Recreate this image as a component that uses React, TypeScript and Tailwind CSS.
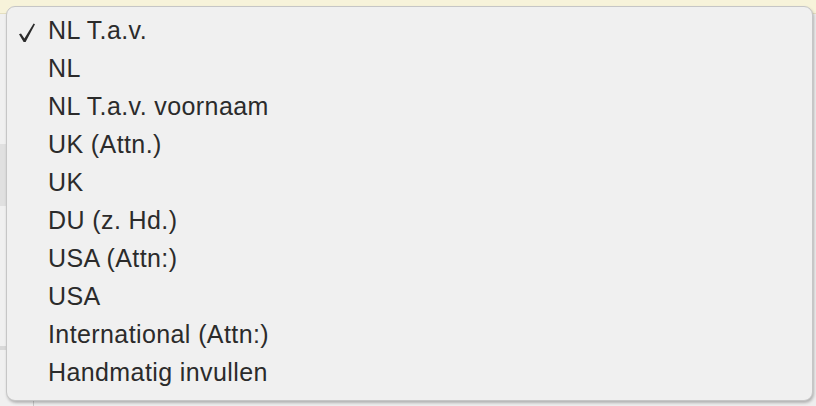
import React from 'react';

const options = [
  'NL T.a.v.',
  'NL',
  'NL T.a.v. voornaam',
  'UK (Attn.)',
  'UK',
  'DU (z. Hd.)',
  'USA (Attn:)',
  'USA',
  'International (Attn:)',
  'Handmatig invullen',
];

const Check = () => (
  <svg width="18" height="20" viewBox="0 0 18 20" className="text-[#2b2b2b]">
    <path d="M1 11.2 L3 10.4 L6.4 15.6 L15.6 0.6 L17 1.2 L7.6 19 L5.6 19 Z" fill="currentColor" />
  </svg>
);

export default function App() {
  const selected = 0;

  return (
    <div className="relative h-[406px] w-[816px] overflow-hidden bg-[#ececec] font-['Liberation_Sans',Arial,sans-serif]">
      {/* page behind the menu */}
      <div className="h-[14px] border-b border-[#e4dfc0] bg-[#f7f3da]" />
      <div className="flex h-[392px]">
        <div className="flex w-[34px] flex-col border-r border-[#c9c9c9] bg-[#f0f0f0]">
          <div className="h-[130px]" />
          <div className="h-[62px] bg-[#e0e0e0]" />
          <div className="h-[140px]" />
          <div className="h-[4px] bg-[#d8d8d8]" />
        </div>
        <div className="flex-1 bg-[#eeeeee]" />
      </div>

      {/* popup menu */}
      <ul className="absolute left-[6px] top-[6px] w-[807px] rounded-[9px] border border-[#c6c6c6] bg-[#f0f0f0] pb-[8px] pt-[5px] shadow-[1px_2px_3px_rgba(0,0,0,0.25)]">
        {options.map((label, i) => (
          <li key={label} className="flex h-[38px] items-center text-[25px] tracking-[0.4px] text-[#2b2b2b]">
            <span className="flex w-[41px] items-center pl-[11px] pt-[3px]">
              {i === selected ? <Check /> : null}
            </span>
            <span>{label}</span>
          </li>
        ))}
      </ul>
    </div>
  );
}
